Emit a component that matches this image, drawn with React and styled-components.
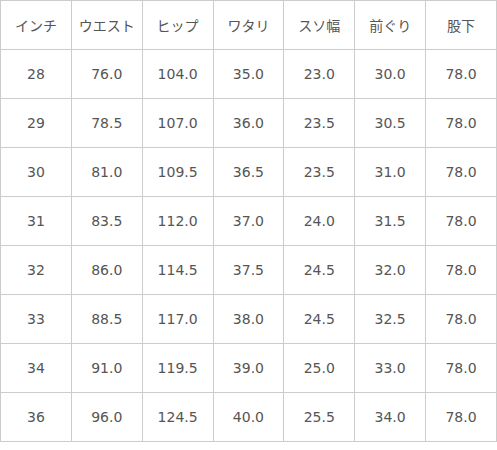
import React from 'react';
import styled, { createGlobalStyle } from 'styled-components';

const headers = ['インチ', 'ウエスト', 'ヒップ', 'ワタリ', 'スソ幅', '前ぐり', '股下'];

const rows = [
  ['28', '76.0', '104.0', '35.0', '23.0', '30.0', '78.0'],
  ['29', '78.5', '107.0', '36.0', '23.5', '30.5', '78.0'],
  ['30', '81.0', '109.5', '36.5', '23.5', '31.0', '78.0'],
  ['31', '83.5', '112.0', '37.0', '24.0', '31.5', '78.0'],
  ['32', '86.0', '114.5', '37.5', '24.5', '32.0', '78.0'],
  ['33', '88.5', '117.0', '38.0', '24.5', '32.5', '78.0'],
  ['34', '91.0', '119.5', '39.0', '25.0', '33.0', '78.0'],
  ['36', '96.0', '124.5', '40.0', '25.5', '34.0', '78.0'],
];

const GlobalStyle = createGlobalStyle`
  body {
    margin: 0;
    background: #fff;
  }
`;

const SizeTable = styled.table`
  width: 497px;
  table-layout: fixed;
  border-collapse: collapse;
  font-family: 'DejaVu Sans', Verdana, 'Noto Sans CJK JP', sans-serif;
  font-size: 14px;
  color: #555;
`;

const Cell = styled.td`
  height: 48px;
  padding: 0;
  border: 1px solid #ccc;
  text-align: center;
  vertical-align: middle;
  font-weight: normal;
`;

const HeadCell = styled(Cell).attrs({ as: 'th' })`
  font-family: 'Noto Sans CJK JP', sans-serif;
  font-weight: normal;
`;

export default function App() {
  return (
    <>
      <GlobalStyle />
      <SizeTable>
        <thead>
          <tr>
            {headers.map((h) => (
              <HeadCell key={h}>{h}</HeadCell>
            ))}
          </tr>
        </thead>
        <tbody>
          {rows.map((row) => (
            <tr key={row[0]}>
              {row.map((v, i) => (
                <Cell key={i}>{v}</Cell>
              ))}
            </tr>
          ))}
        </tbody>
      </SizeTable>
    </>
  );
}
